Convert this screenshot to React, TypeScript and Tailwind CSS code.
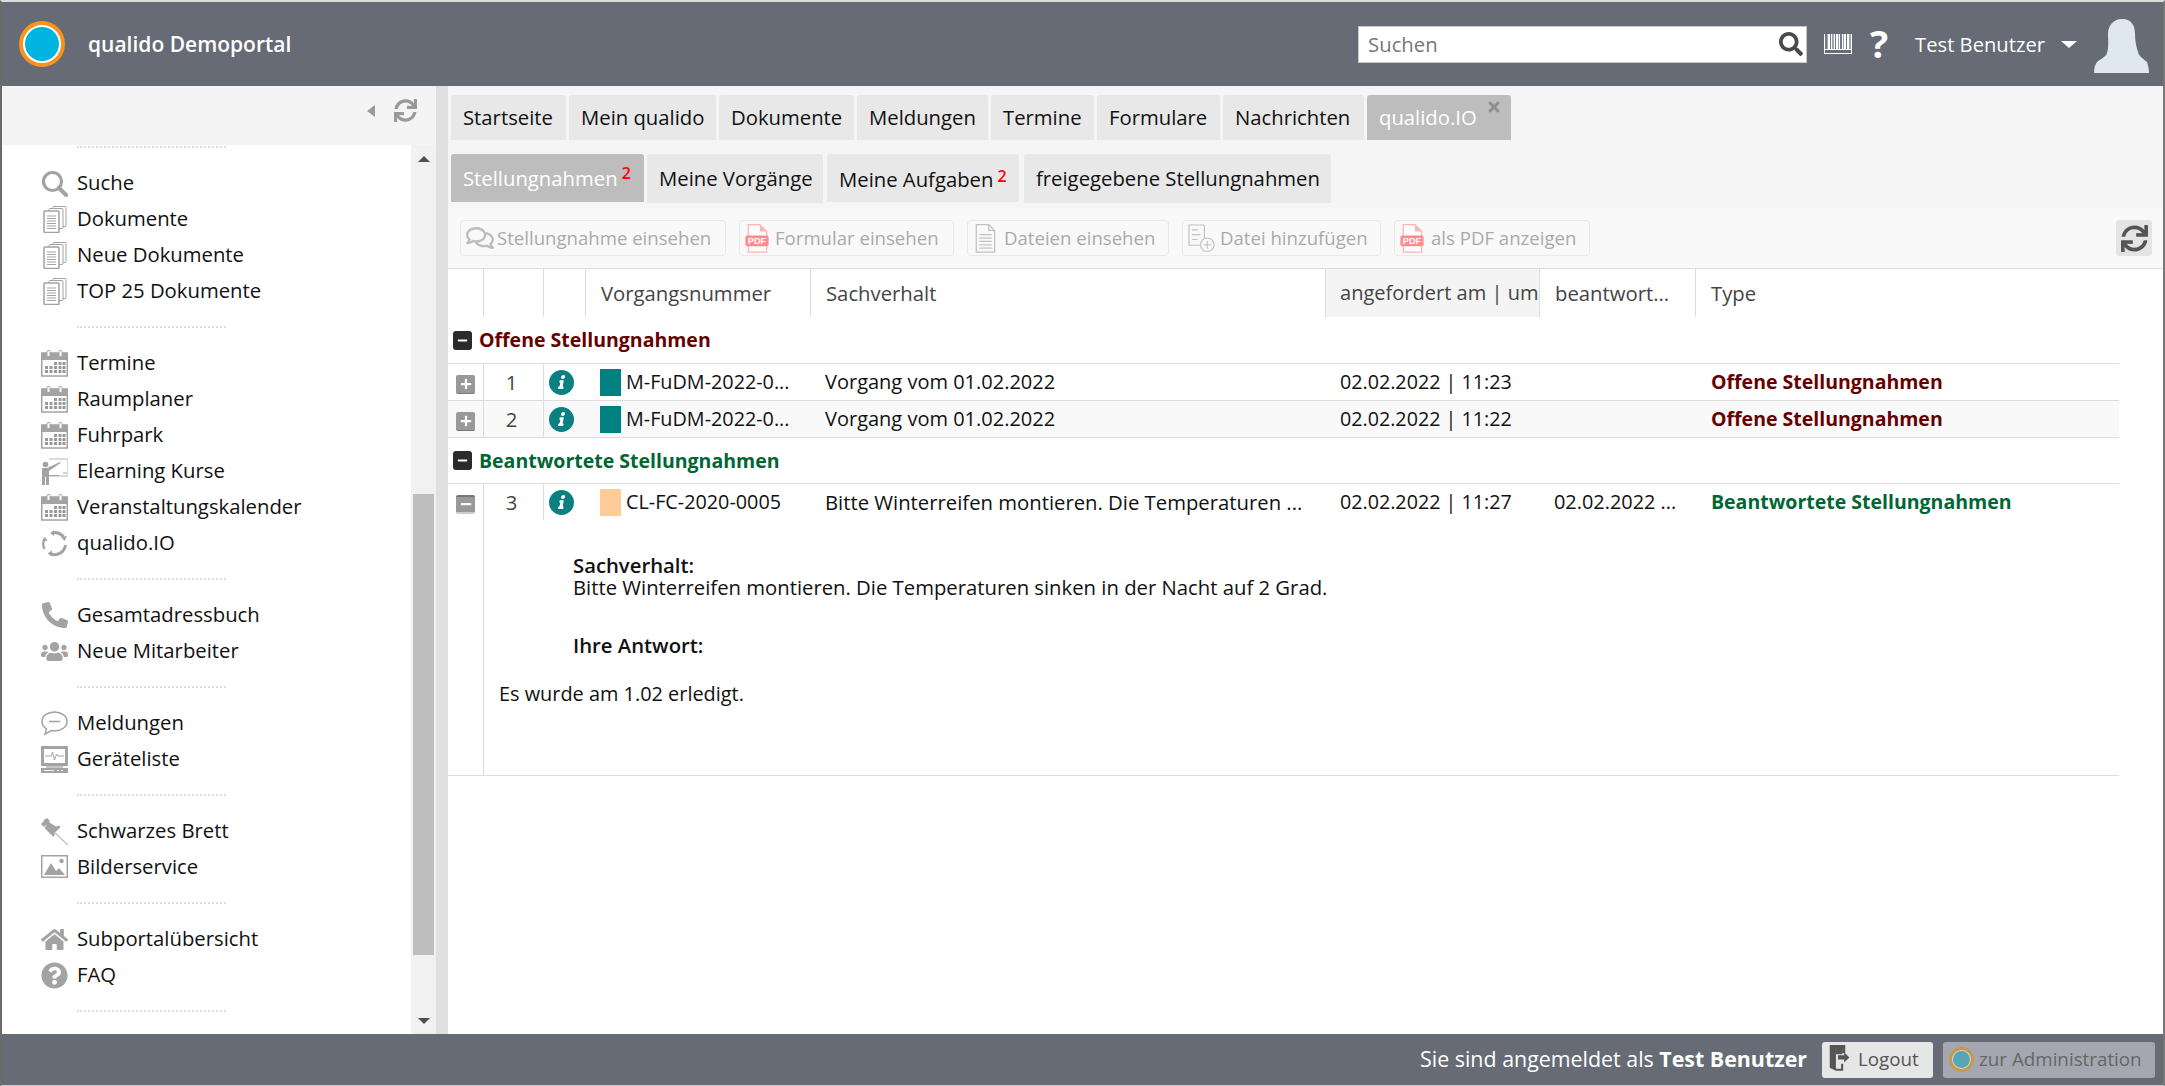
import React from "react";
import { FaSearch, FaSync, FaRegComments, FaPhoneAlt, FaUsers, FaHome, FaQuestionCircle, FaPlus, FaMinus, FaInfo, FaTimes } from "react-icons/fa";

const Cal = () => (
  <svg viewBox="0 0 27 27" className="w-[27px] h-[27px]">
    <rect x="0.75" y="3" width="25.5" height="23" fill="#fff" stroke="#a3a3a3" strokeWidth="1.5" />
    <rect x="0" y="3" width="27" height="7" fill="#a3a3a3" />
    <rect x="6" y="0.5" width="3" height="6" rx="1" fill="#fff" stroke="#a3a3a3" />
    <rect x="18" y="0.5" width="3" height="6" rx="1" fill="#fff" stroke="#a3a3a3" />
    {[12, 16, 20].map((y) =>
      [4, 8.5, 13, 17.5, 21.5].map((x) =>
        y === 12 && x < 13 ? null : <rect key={x + "-" + y} x={x} y={y} width="3" height="3" fill="#999" />
      )
    )}
  </svg>
);
const Docs = () => (
  <svg viewBox="0 0 27 27" className="w-[27px] h-[27px]" fill="#fff" stroke="#a3a3a3" strokeWidth="1">
    <rect x="12" y="0.5" width="13" height="20" rx="1" />
    <rect x="8" y="2.5" width="14" height="20" rx="1" />
    <rect x="3" y="5" width="15" height="21.5" rx="1" strokeWidth="1.5" />
    <path d="M6 10h9M6 12.5h9M6 15h9M6 17.5h9M6 20h9M6 22.5h9" />
  </svg>
);
const Lens = () => (
  <svg viewBox="0 0 27 27" className="w-[27px] h-[27px]" fill="none" stroke="#a3a3a3">
    <circle cx="11.5" cy="11.5" r="9" strokeWidth="3.2" />
    <path d="M18 18l7 7" strokeWidth="4" strokeLinecap="round" />
  </svg>
);
const Teach = () => (
  <svg viewBox="0 0 27 27" className="w-[27px] h-[27px]">
    <path d="M8 1h19v17H8" fill="none" stroke="#b5b5b5" strokeWidth="1" />
    <path d="M22 15h4" stroke="#a3a3a3" strokeWidth="1" />
    <circle cx="4.5" cy="6.5" r="2.8" fill="#a3a3a3" />
    <path d="M1 10h5l13-6 .5 1L8 13v4h10v1H8v9H5v-8H4v8H1z" fill="#a3a3a3" />
  </svg>
);
const Ring = () => (
  <svg viewBox="0 0 27 27" className="w-[27px] h-[27px]" fill="none" stroke="#a3a3a3" strokeWidth="3">
    <path d="M12 2.800a11 11 0 0 1 10.500 4.200" />
    <path d="M13 .200L9 3l4 3z" fill="#a3a3a3" stroke="none" />
    <path d="M26 6l-6 1 3.500 4z" fill="#a3a3a3" stroke="none" />
    <path d="M24.500 15a11 11 0 0 1-14.500 9" />
    <path d="M11 20.500L6.500 23.500l4.500 3z" fill="#a3a3a3" stroke="none" />
    <path d="M3.500 19A11 11 0 0 1 3.500 9" strokeWidth="2.400" />
    <path d="M1 11l3-4.500 2.500 4.500z" fill="#a3a3a3" stroke="none" />
  </svg>
);
const Bubble = () => (
  <svg viewBox="0 0 27 27" className="w-[27px] h-[27px]" fill="#fff" stroke="#a3a3a3" strokeWidth="1.500">
    <path d="M13.5 2C6.6 2 1 6 1 11.5c0 3 1.800 5.600 4.400 7.300L4 24l6.500-3.400c1 .2 2 .3 3 .3C20.400 20.900 26 17 26 11.500S20.400 2 13.500 2z" />
    <path d="M8 11.500h11" strokeWidth="1.600" />
  </svg>
);
const Device = () => (
  <svg viewBox="0 0 27 27" className="w-[27px] h-[27px]">
    <rect x="0" y="0" width="27" height="20" fill="#a3a3a3" />
    <rect x="3" y="3" width="21" height="14" fill="#fff" />
    <path d="M4 10h6l1.500-4 2 8 2-6 1 2h6.500" fill="none" stroke="#a3a3a3" strokeWidth="1" />
    <path d="M5 20h17v2H5z" fill="#c5c5c5" />
    <rect x="0" y="22" width="27" height="5" fill="#a3a3a3" />
    <rect x="3" y="24" width="10" height="1" fill="#fff" />
    <rect x="16" y="24" width="2" height="1" fill="#fff" />
    <rect x="20" y="24" width="2" height="1" fill="#fff" />
  </svg>
);
const Pic = () => (
  <svg viewBox="0 0 27 27" className="w-[27px] h-[27px]">
    <rect x="0.750" y="1.750" width="25.500" height="21.500" fill="#fff" stroke="#a3a3a3" strokeWidth="1.500" />
    <path d="M3 21l7-12 5 8 3-3 6 7z" fill="#a3a3a3" />
    <circle cx="20.500" cy="7" r="2.200" fill="#a3a3a3" />
  </svg>
);
const Pin = () => (
  <svg viewBox="0 0 27 27" className="w-[27px] h-[27px]">
    <path d="M6 .500l1.800 3.500 7.200 4.500 3-1 1.500 1.500-5 5-2 5-1.500-1.500-3-3-3-3-1.500-1.500 2-3-3-5z" fill="#a3a3a3" />
    <path d="M13 14l14 13" stroke="#c5c5c5" strokeWidth="1.500" />
    <path d="M0 6l6-6 3 3-6 6z" fill="#a3a3a3" />
  </svg>
);

const I = ({ children, c = "w-[27px] h-[27px]" }: { children: React.ReactNode; c?: string }) => (
  <span className={`${c} flex items-center justify-center text-[#a3a3a3]`}>{children}</span>
);

type Item = [React.ReactNode, string];
const groups: Item[][] = [
  [
    [<Lens />, "Suche"],
    [<Docs />, "Dokumente"],
    [<Docs />, "Neue Dokumente"],
    [<Docs />, "TOP 25 Dokumente"],
  ],
  [
    [<Cal />, "Termine"],
    [<Cal />, "Raumplaner"],
    [<Cal />, "Fuhrpark"],
    [<Teach />, "Elearning Kurse"],
    [<Cal />, "Veranstaltungskalender"],
    [<Ring />, "qualido.IO"],
  ],
  [
    [<I><FaPhoneAlt className="w-[26px] h-[26px]" /></I>, "Gesamtadressbuch"],
    [<I><FaUsers className="w-[27px] h-[27px]" /></I>, "Neue Mitarbeiter"],
  ],
  [
    [<Bubble />, "Meldungen"],
    [<Device />, "Geräteliste"],
  ],
  [
    [<Pin />, "Schwarzes Brett"],
    [<Pic />, "Bilderservice"],
  ],
  [
    [<I><FaHome className="w-[27px] h-[27px]" /></I>, "Subportalübersicht"],
    [<I><FaQuestionCircle className="w-[27px] h-[27px]" /></I>, "FAQ"],
  ],
];

const Sep = () => (
  <div className="h-9 flex items-center pl-[75px]">
    <div className="w-[149px] border-t-2 border-dotted border-[#dcdcdc]" />
  </div>
);

const Sidebar = () => (
  <aside className="w-[434px] shrink-0 flex flex-col bg-[#f4f4f4]">
    <div className="h-[59px] flex items-center justify-end gap-[19px] pr-[19px] pb-[10px] text-[#999]">
      <span className="w-0 h-0 border-y-[6px] border-y-transparent border-r-[8px] border-r-[#999]" />
      <FaSync className="w-[23px] h-[23px]" />
    </div>
    <div className="flex-1 min-h-0 flex">
      <div className="w-[409px] bg-white overflow-hidden relative">
        <div className="absolute left-0 right-0 top-[-16px]">
          {groups.map((g, i) => (
            <div key={i}>
              <Sep />
              {g.map(([icon, t]) => (
                <div key={t} className="h-9 flex items-center pl-[39px] gap-[9px] text-[#111]">
                  <span className="w-[27px] h-[27px] shrink-0 flex items-center justify-center">{icon}</span>
                  <span className="pb-[2px]">{t}</span>
                </div>
              ))}
            </div>
          ))}
          <Sep />
        </div>
      </div>
      <div className="w-[25px] bg-[#f1f1f1] flex flex-col items-center relative">
        <span className="absolute top-[11px] w-0 h-0 border-x-[6px] border-x-transparent border-b-[6px] border-b-[#505050]" />
        <div className="absolute top-[349px] left-[2px] w-[21px] h-[461px] bg-[#bdbdbd]" />
        <span className="absolute bottom-[10px] w-0 h-0 border-x-[6px] border-x-transparent border-t-[6px] border-t-[#505050]" />
      </div>
    </div>
  </aside>
);

const Logo = () => (
  <span className="w-[46px] h-[46px] rounded-full bg-white border-[4px] border-[#f7941d] flex items-center justify-center shrink-0">
    <span className="w-[34px] h-[34px] rounded-full bg-[#00b4e0]" />
  </span>
);

const Barcode = () => (
  <svg viewBox="0 0 28 20" className="w-[28px] h-[20px] shrink-0">
    <rect width="28" height="20" fill="#fff" />
    {[1, 3, 6, 8, 11, 14, 16, 19, 22, 25].map((x, i) => (
      <rect key={x} x={x} y="0" width={i % 3 === 0 ? 2 : 1} height="15" fill={i % 2 ? "#9aa" : "#778"} />
    ))}
    <rect x="1" y="16" width="26" height="3" fill="#666b75" />
  </svg>
);

const Avatar = () => (
  <svg viewBox="0 0 55 54" className="w-[55px] h-[54px] shrink-0">
    <path d="M28 0c9 0 13 6 13 15 0 6 1 12 3 18 1 5 6 7 9 10 1 3 2 7 2 11H0c0-5 1-8 3-11 3-3 9-5 10-9 2-6 1-13 1-19C14 7 19 0 28 0z" fill="#dfe7f0" />
  </svg>
);

const Header = () => (
  <header className="h-[84px] shrink-0 bg-[#666b75] flex items-center text-white">
    <div className="pl-[17px]"><Logo /></div>
    <div className="ml-[23px] text-[21px] font-semibold mt-[2px]">qualido Demoportal</div>
    <div className="ml-auto flex items-center h-full">
      <div className="w-[449px] h-[37px] bg-white border border-[#c8c8c8] flex items-center pl-[9px] pr-[3px]">
        <span className="text-[#777] flex-1">Suchen</span>
        <FaSearch className="w-[24px] h-[24px] text-[#4a4a4a]" />
      </div>
      <div className="ml-[17px]"><Barcode /></div>
      <div className="ml-[18px] w-[20px] text-[38px] leading-none font-bold mb-[3px]">?</div>
      <div className="ml-[25px] text-[20.200px] font-medium">Test Benutzer</div>
      <span className="ml-[16px] w-0 h-0 border-x-[8px] border-x-transparent border-t-[7px] border-t-white" />
      <div className="ml-[17px] mr-[14px] mt-[4px]"><Avatar /></div>
    </div>
  </header>
);

const row1: [string, string][] = [
  ["Startseite", "w-[115px]"],
  ["Mein qualido", "w-[147px]"],
  ["Dokumente", "w-[135px]"],
  ["Meldungen", "w-[131px]"],
  ["Termine", "w-[103px]"],
  ["Formulare", "w-[123px]"],
  ["Nachrichten", "w-[141px]"],
];

const Tab = ({ w, active, h, children }: { w: string; active?: boolean; h: string; children: React.ReactNode }) => (
  <div className={`${w} ${h} rounded-t-[3px] pl-[12px] flex items-center whitespace-nowrap relative ${active ? "bg-[#bdbdbd] text-white font-medium" : "bg-[#e8e8e8] text-[#111]"}`}>
    {children}
  </div>
);

const Sup = () => <sup className="text-[#f00] text-[16px] font-semibold ml-[4px] top-[-5px] relative leading-none">2</sup>;

const Pdf = () => (
  <svg viewBox="0 0 24 30" className="w-[24px] h-[29px] shrink-0">
    <path d="M3 .7h12l7 7V29H3z" fill="#fff" stroke="#ffb3b3" strokeWidth="1.300" />
    <path d="M15 .7v7h7" fill="#ffb3b3" />
    <rect x="0" y="12" width="24" height="11" rx="2" fill="#ff8c8c" />
    <text x="12" y="21" textAnchor="middle" fontSize="9.500" fontWeight="700" fontFamily="Liberation Sans, sans-serif" fill="#fff">PDF</text>
  </svg>
);
const FileI = () => (
  <svg viewBox="0 0 22 30" className="w-[22px] h-[29px] shrink-0" fill="none" stroke="#c2c2c2" strokeWidth="1.300">
    <path d="M2 .7h13l6 6V29H2z" />
    <path d="M15 .7v6h6M5 11h13M5 14.500h13M5 18h13M5 21.500h13M5 25h13" />
  </svg>
);
const FileAdd = () => (
  <svg viewBox="0 0 28 30" className="w-[27px] h-[29px] shrink-0" fill="none" stroke="#c2c2c2" strokeWidth="1.200">
    <path d="M13 22H1V1h15l1 1v13" />
    <path d="M4 6h6M4 11h9M4 16h6" />
    <circle cx="20" cy="21.500" r="7" fill="#f9f9f9" />
    <path d="M20 17.500v8M16 21.500h8" />
  </svg>
);

const tools: [React.ReactNode, string, string, string][] = [
  [<FaRegComments className="w-[28px] h-[28px] text-[#bdbdbd] shrink-0" />, "Stellungnahme einsehen", "w-[266px]", "pl-[5px] gap-[3px]"],
  [<Pdf />, "Formular einsehen", "w-[215px]", "pl-[5px] gap-[6px]"],
  [<FileI />, "Dateien einsehen", "w-[202px]", "pl-[6px] gap-[8px]"],
  [<FileAdd />, "Datei hinzufügen", "w-[199px]", "pl-[5px] gap-[5px]"],
  [<Pdf />, "als PDF anzeigen", "w-[196px]", "pl-[5px] gap-[7px]"],
];

const cols = ["w-[35px]", "w-[60px]", "w-[42px]", "w-[225px]", "w-[515px]", "w-[214px]", "w-[156px]", "w-[424px]"];
const cell = "shrink-0 border-l border-[#ddd] h-full flex items-center";

const HeadRow = () => (
  <div className="h-[48px] flex text-[#444] shrink-0">
    <div className={`${cols[0]} shrink-0`} />
    <div className={`${cols[1]} ${cell}`} />
    <div className={`${cols[2]} ${cell}`} />
    <div className={`${cols[3]} ${cell} pl-[15px] pt-[1px]`}>Vorgangsnummer</div>
    <div className={`${cols[4]} ${cell} pl-[15px] pt-[1px]`}>Sachverhalt</div>
    <div className={`${cols[5]} ${cell} pl-[14px] pt-[1px] bg-[#f4f4f4] text-[20.050px] whitespace-nowrap`}>angefordert am | um</div>
    <div className={`${cols[6]} ${cell} pl-[15px] pt-[1px]`}>beantwort...</div>
    <div className={`${cols[7]} ${cell} pl-[15px] pt-[1px]`}>Type</div>
  </div>
);

const Group = ({ t, c, h }: { t: string; c: string; h: string }) => (
  <div className={`${h} w-[1671px] flex items-center pl-[5px] gap-[7px] font-bold text-[19.500px] border-b border-[#ddd] ${c} shrink-0`}>
    <span className="w-[19px] h-[19px] rounded-[3px] bg-[#2b2b2b] flex items-center justify-center shrink-0">
      <FaMinus className="w-[11px] h-[11px] text-white" />
    </span>
    <span>{t}</span>
  </div>
);

const Row = ({ n, exp, color, code, text, tsize, at, ans, type, tc, bg, last }: { n: number; exp?: boolean; color: string; code: string; text: string; tsize: string; at: string; ans?: string; type: string; tc: string; bg?: string; last?: boolean }) => (
  <div className={`${last ? "h-[36px]" : "h-[37px] border-b border-[#ddd]"} w-[1671px] flex shrink-0 text-[#111] ${bg ?? ""}`}>
    <div className={`${cols[0]} shrink-0 flex items-center pl-[8px] pt-[4px]`}>
      <span className={`w-[19px] h-[19px] rounded-[2px] bg-[#999] flex items-center justify-center ${exp ? "border-y-2 border-t-[#777] border-b-[#ccc]" : "border-b border-[#777]"}`}>
        {exp ? <FaMinus className="w-[12px] h-[12px] text-white" /> : <FaPlus className="w-[12px] h-[12px] text-white" />}
      </span>
    </div>
    <div className={`${cols[1]} ${cell} justify-center text-[#444] pr-[4px]`}>{n}</div>
    <div className={`${cols[2]} ${cell} pl-[5px]`}>
      <span className="w-[25px] h-[25px] rounded-full bg-[#0b8080] flex items-center justify-center">
        <FaInfo className="w-[14px] h-[14px] text-white -skew-x-12" />
      </span>
    </div>
    <div className={`${cols[3]} shrink-0 flex items-center pl-[15px] gap-[5px]`}>
      <span className={`w-[21px] h-[27px] ${color} shrink-0`} />
      <span className="whitespace-nowrap text-[19.800px]">{code}</span>
    </div>
    <div className={`${cols[4]} shrink-0 flex items-center pl-[15px] whitespace-nowrap ${tsize}`}>{text}</div>
    <div className={`${cols[5]} shrink-0 flex items-center pl-[15px] text-[19.700px]`}>{at}</div>
    <div className={`${cols[6]} shrink-0 flex items-center pl-[15px] whitespace-nowrap text-[19.900px]`}>{ans}</div>
    <div className={`${cols[7]} shrink-0 flex items-center pl-[16px] font-bold text-[19.500px] ${tc}`}>{type}</div>
  </div>
);

const Main = () => (
  <main className="flex-1 min-w-0 flex flex-col bg-white">
    <div className="bg-[#f5f5f5] h-[122px] shrink-0 pl-[3px] pt-[9px] flex flex-col gap-[14px]">
      <div className="flex gap-[3px]">
        {row1.map(([t, w]) => (
          <Tab key={t} w={w} h="h-[45px]">{t}</Tab>
        ))}
        <Tab w="w-[144px]" h="h-[45px]" active>
          qualido.IO
          <FaTimes className="absolute right-[9px] top-[4px] w-[16px] h-[16px] text-[#8f8f8f]" />
        </Tab>
      </div>
      <div className="flex gap-[3px] items-start">
        <Tab w="w-[193px]" h="h-[48px]" active>Stellungnahmen<Sup /></Tab>
        <Tab w="w-[176px]" h="h-[49px]">Meine Vorgänge</Tab>
        <Tab w="w-[192px] ml-px" h="h-[48px]"><span className="pt-[2px]">Meine Aufgaben<Sup /></span></Tab>
        <Tab w="w-[307px] ml-[2px]" h="h-[49px]">freigegebene Stellungnahmen</Tab>
      </div>
    </div>
    <div className="h-[61px] shrink-0 bg-[#f9f9f9] border-b border-[#ddd] flex items-start pt-[12px] pl-[12px] gap-[13px] text-[#aaa] text-[18.600px] font-medium">
      {tools.map(([ic, t, w, s]) => (
        <div key={t} className={`${w} ${s} h-[36px] border border-[#e9e9e9] rounded-[4px] flex items-center whitespace-nowrap`}>
          {ic}
          <span>{t}</span>
        </div>
      ))}
      <div className="ml-auto mr-[11px] w-[36px] h-[36px] bg-[#e4e4e4] rounded-[3px] flex items-center justify-center">
        <FaSync className="w-[27px] h-[27px] text-[#555]" />
      </div>
    </div>
    <HeadRow />
    <Group h="h-[47px]" t="Offene Stellungnahmen" c="text-[#660000]" />
    <Row n={1} color="bg-[#008080]" code="M-FuDM-2022-0..." text="Vorgang vom 01.02.2022" tsize="text-[20px]" at="02.02.2022 | 11:23" type="Offene Stellungnahmen" tc="text-[#660000]" />
    <Row n={2} color="bg-[#008080]" code="M-FuDM-2022-0..." text="Vorgang vom 01.02.2022" tsize="text-[20px]" at="02.02.2022 | 11:22" type="Offene Stellungnahmen" tc="text-[#660000]" bg="bg-[#f9f9f9]" />
    <Group h="h-[46px]" t="Beantwortete Stellungnahmen" c="text-[#006633]" />
    <Row n={3} exp last color="bg-[#ffcc99]" code="CL-FC-2020-0005" text="Bitte Winterreifen montieren. Die Temperaturen ..." tsize="text-[20.300px]" at="02.02.2022 | 11:27" ans="02.02.2022 ..." type="Beantwortete Stellungnahmen" tc="text-[#006633]" />
    <div className="h-[256px] w-[1671px] shrink-0 flex border-b border-[#ddd]">
      <div className={`${cols[0]} shrink-0`} />
      <div className="flex-1 border-l border-[#ddd] text-[#111] pl-[15px]">
        <div className="pl-[74px] pt-[34px] leading-[22px]">
          <div className="font-semibold">Sachverhalt:</div>
          <div>Bitte Winterreifen montieren. Die Temperaturen sinken in der Nacht auf 2 Grad.</div>
          <div className="font-semibold mt-[36px]">Ihre Antwort:</div>
        </div>
        <div className="mt-[27px] leading-[22px] text-[19.900px]">Es wurde am 1.02 erledigt.</div>
      </div>
    </div>
  </main>
);

const Footer = () => (
  <footer className="h-[51px] shrink-0 bg-[#666b75] flex items-center justify-end text-white pr-[8px]">
    <span className="text-[21.400px] font-medium">Sie sind angemeldet als <b>Test Benutzer</b></span>
    <div className="ml-[15px] w-[111px] h-[36px] rounded-[3px] bg-[#e6e6e6] text-[#555] text-[18.800px] flex items-center pl-[3px] gap-[7px]">
      <svg viewBox="0 0 24 30" className="w-[26px] h-[31px] shrink-0">
        <path d="M4 1h15v8h-3V4H12l-2 0v22l-6-3z" fill="#555" />
        <path d="M10 4l6-1v7h-2l-4 0z" fill="#555" />
        <path d="M12 11h6V8l5 5-5 5v-3h-6z" fill="#555" />
        <path d="M16 19v6h-6" fill="none" stroke="#555" strokeWidth="2" />
      </svg>
      <span>Logout</span>
    </div>
    <div className="ml-[10px] w-[212px] h-[36px] rounded-[3px] bg-[#a4a7af] text-[#666] text-[18.800px] flex items-center pl-[6px] gap-[5px]">
      <span className="w-[25px] h-[25px] rounded-full border-[3px] border-[#c39a4e] bg-[#d4d4d4] flex items-center justify-center shrink-0">
        <span className="w-[17px] h-[17px] rounded-full bg-[#58a6b5]" />
      </span>
      <span>zur Administration</span>
    </div>
  </footer>
);

export default function App() {
  return (
    <div className="w-[2165px] h-[1086px] overflow-hidden flex flex-col bg-white border-t-2 border-t-[#dcdcdc] border-l-2 border-l-[#6a6a6a] border-r-2 border-r-[#777] border-b border-b-[#ccc] text-[20.300px] font-['Open_Sans',sans-serif]">
      <Header />
      <div className="flex-1 min-h-0 flex">
        <Sidebar />
        <div className="w-[12px] shrink-0 bg-[#e0e0e0]" />
        <Main />
      </div>
      <Footer />
    </div>
  );
}
